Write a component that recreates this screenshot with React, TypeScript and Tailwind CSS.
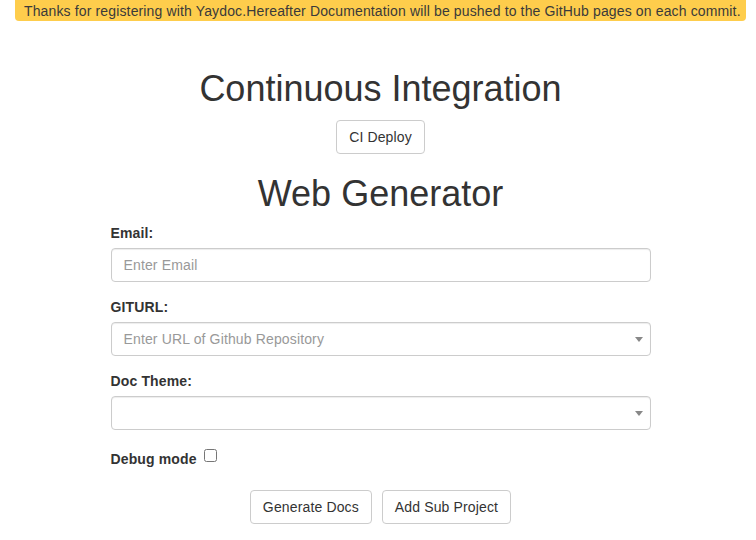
const fieldClass =
    'block w-full h-[34px] px-3 text-[14px] tracking-[0.14px] text-[#555] bg-white border border-[#ccc] rounded-[4px] shadow-[inset_0_1px_1px_rgba(0,0,0,0.075)] placeholder:text-[#999] outline-none'

const Caret = () => (
    <span className="absolute right-[8px] top-[15px] w-0 h-0 border-l-[4px] border-r-[4px] border-t-[5px] border-l-transparent border-r-transparent border-t-[#888]" />
)

const SelectBox = ({ placeholder }: { placeholder?: string }) => (
    <div className="relative">
        <div className={fieldClass + ' flex items-center text-[#999]'}>{placeholder}</div>
        <Caret />
    </div>
)

const Button = ({ children }: { children: React.ReactNode }) => (
    <button className="h-[34px] px-3 text-[14px] tracking-[0.14px] text-[#333] bg-white border border-[#ccc] rounded-[4px]">
        {children}
    </button>
)

export default function App() {
    return (
        <div className="min-h-[540px] bg-white pl-[15px] pr-[10px] text-[#333] font-['Liberation_Sans',Arial,sans-serif] text-[14px] tracking-[0.14px]">
            <div className="h-[21px] bg-[#fecd4c] rounded-b-[4px] pl-[9px] flex items-center text-[14px] text-[#3a3a3a] leading-none">
                Thanks for registering with Yaydoc.Hereafter Documentation will be pushed to the GitHub pages on each commit.
            </div>

            <h1 className="mt-[48px] text-center text-[36px] leading-[40px] tracking-normal">Continuous Integration</h1>
            <div className="mt-[11px] flex justify-center">
                <Button>CI Deploy</Button>
            </div>
            <h1 className="mt-[20px] text-center text-[36px] leading-[40px] tracking-normal">Web Generator</h1>

            <form className="w-[540px] mx-auto mt-[9px]">
                <label className="block font-bold leading-[20px]">Email:</label>
                <input className={fieldClass + ' mt-[5px]'} placeholder="Enter Email" />

                <label className="block font-bold leading-[20px] mt-[15px]">GITURL:</label>
                <div className="mt-[5px]">
                    <SelectBox placeholder="Enter URL of Github Repository" />
                </div>

                <label className="block font-bold leading-[20px] mt-[15px]">Doc Theme:</label>
                <div className="mt-[5px]">
                    <SelectBox />
                </div>

                <div className="mt-[19px] flex items-center leading-[20px]">
                    <span className="font-bold">Debug mode</span>
                    <input type="checkbox" className="ml-[7px] w-[13px] h-[13px] -mt-[7px]" />
                </div>

                <div className="mt-[21px] flex justify-center gap-[10px]">
                    <Button>Generate Docs</Button>
                    <Button>Add Sub Project</Button>
                </div>
            </form>
        </div>
    )
}
